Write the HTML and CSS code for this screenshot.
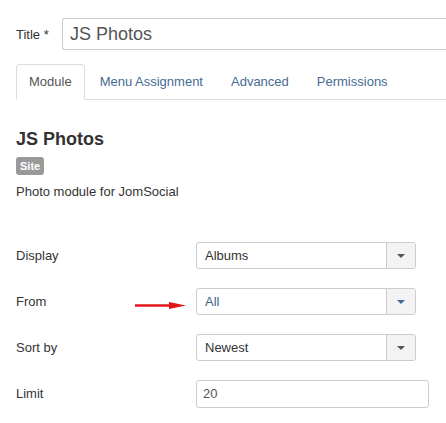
FILE: index.html
```html
<!DOCTYPE html>
<html lang="en">
<head>
    <meta charset="UTF-8">
    <meta name="viewport" content="width=device-width, initial-scale=1.0">
    <title>JS Photos - Module</title>
    <link rel="stylesheet" href="styles.css">
</head>
<body>
    <div class="title-row">
        <label for="title" class="title-label">Title *</label>
        <input type="text" id="title" class="title-input" value="JS Photos">
    </div>

    <ul class="tabs">
        <li class="active"><a href="#">Module</a></li>
        <li><a href="#">Menu Assignment</a></li>
        <li><a href="#">Advanced</a></li>
        <li><a href="#">Permissions</a></li>
    </ul>

    <h2 class="module-name">JS Photos</h2>
    <span class="badge">Site</span>
    <p class="module-desc">Photo module for JomSocial</p>

    <div class="fields">
        <div class="field">
            <div class="field-label">Display</div>
            <div class="chzn">
                <span class="chzn-text">Albums</span>
                <span class="chzn-btn"><b class="caret"></b></span>
            </div>
        </div>

        <div class="field">
            <div class="field-label">
                From
                <svg class="pointer" width="51" height="9" viewBox="0 0 51 9">
                    <line x1="0" y1="4.5" x2="38" y2="4.5" stroke="#e3171a" stroke-width="2.6"/>
                    <polygon points="34,1 51,4.5 34,8" fill="#e3171a"/>
                </svg>
            </div>
            <div class="chzn focus">
                <span class="chzn-text">All</span>
                <span class="chzn-btn"><b class="caret"></b></span>
            </div>
        </div>

        <div class="field">
            <div class="field-label">Sort by</div>
            <div class="chzn">
                <span class="chzn-text">Newest</span>
                <span class="chzn-btn"><b class="caret"></b></span>
            </div>
        </div>

        <div class="field">
            <div class="field-label">Limit</div>
            <input type="text" class="text-input" value="20">
        </div>
    </div>
</body>
</html>
```

FILE: styles.css
```css
body { margin: 0; padding: 18px 0 0 16px; font-family: "Liberation Sans", Arial, sans-serif; font-size: 13px; color: #333; background: #fff; }

.title-row { display: flex; align-items: center; height: 32px; }
.title-label { width: 46px; color: #333; }
.title-input { flex: 1; min-width: 0; height: 32px; box-sizing: border-box; padding: 0 7px; border: 1px solid #ccc; border-right: none; border-radius: 3px 0 0 3px; font-family: inherit; font-size: 18px; color: #555; }

.tabs { display: flex; list-style: none; margin: 14px 0 0 0; padding: 0; border-bottom: 1px solid #ddd; }
.tabs li { margin-bottom: -1px; margin-right: 2px; }
.tabs a { display: block; padding: 8px 12px; line-height: 18px; border: 1px solid transparent; border-radius: 4px 4px 0 0; color: #456a93; text-decoration: none; }
.tabs .active a { color: #555; border-color: #ddd #ddd transparent; background: #fff; }

.module-name { margin: 29px 0 0 0; font-size: 18px; line-height: 20px; font-weight: bold; color: #333; }
.badge { display: block; width: fit-content; margin-top: 8px; padding: 2px 4px; font-size: 11px; line-height: 14px; font-weight: bold; color: #fff; background: #999; border-radius: 3px; }
.module-desc { margin: 8px 0 0 0; line-height: 18px; }

.fields { margin-top: 41px; }
.field { display: flex; align-items: center; height: 27px; margin-bottom: 19px; }
.field-label { display: flex; align-items: center; width: 180px; height: 100%; }
.pointer { margin-left: auto; margin-right: 10px; margin-top: 7px; }

.chzn { display: flex; width: 220px; height: 27px; box-sizing: border-box; border: 1px solid #ccc; border-radius: 3px; background: #fff; }
.chzn-text { flex: 1; padding-left: 8px; line-height: 25px; color: #333; }
.chzn-btn { display: flex; align-items: center; justify-content: center; width: 28px; border-left: 1px solid #ccc; background: #f3f3f3; border-radius: 0 3px 3px 0; }
.caret { width: 0; height: 0; border-top: 4px solid #555; border-left: 4px solid transparent; border-right: 4px solid transparent; }
.chzn.focus .chzn-text { color: #3d6389; }
.chzn.focus .caret { border-top-color: #3d6a99; }

.text-input { width: 233px; height: 28px; box-sizing: border-box; padding: 0 6px; border: 1px solid #ccc; border-radius: 3px; font-family: inherit; font-size: 13px; color: #555; }
```
